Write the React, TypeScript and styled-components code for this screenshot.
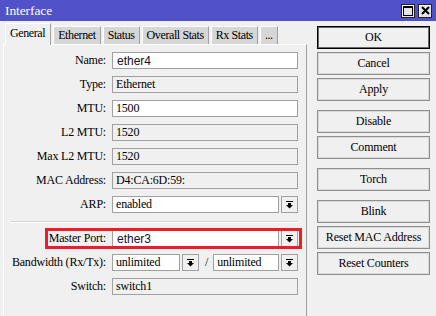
import React from "react"
import styled, { createGlobalStyle, css } from "styled-components"

const SERIF = `"Liberation Serif", "Times New Roman", serif`
const SANS = `"Liberation Sans", Arial, sans-serif`
const BG = "#f0f0f0"
const EDGE = "#a0a0a0"

const GlobalStyle = createGlobalStyle`
  html, body {
    margin: 0;
    padding: 0;
    background: ${BG};
  }
  body {
    font-family: ${SERIF};
    font-size: 12px;
    letter-spacing: -0.2px;
    color: #000;
  }
`

/**
 * Window frame
 */
const Window = styled.div`
  width: 436px;
  height: 316px;
  overflow: hidden;
  background: ${BG};
  display: flex;
  flex-direction: column;
`
Window.displayName = "Window"

const TitleBar = styled.header`
  height: 21px;
  flex: none;
  background: #5151c9;
  color: #fff;
  display: flex;
  align-items: center;
  justify-content: space-between;
  padding: 0 4px 0 5px;
  font-size: 13.5px;
  letter-spacing: -0.1px;
`
TitleBar.displayName = "TitleBar"

const TitleButtons = styled.div`
  display: flex;
  gap: 3px;
`

const TitleButton = styled.div`
  width: 14px;
  height: 14px;
  box-sizing: border-box;
  background: #e4e4e4;
  border: 1px solid #222;
  box-shadow: inset 1px 1px 0 #fff;
  display: flex;
  align-items: center;
  justify-content: center;
`
TitleButton.displayName = "TitleButton"

const Body = styled.div`
  flex: 1;
  display: flex;
  min-height: 0;
`

/**
 * Tabs + form panel
 */
const LeftSide = styled.div`
  width: 304px;
  margin-left: 3px;
  display: flex;
  flex-direction: column;
`

const TabBar = styled.nav`
  height: 23px;
  flex: none;
  display: flex;
  align-items: flex-end;
  gap: 2px;
  padding-left: 2px;
  position: relative;
  z-index: 1;
`

const Tab = styled.div<{ active?: boolean }>`
  box-sizing: border-box;
  height: 18px;
  padding: 0 4px;
  background: #d6d6d6;
  border-left: 1px solid #fff;
  border-top: 1px solid #fff;
  border-right: 1px solid ${EDGE};
  display: flex;
  align-items: center;
  white-space: nowrap;
  letter-spacing: -0.4px;
  ${(p) =>
    p.active &&
    css`
      height: 22px;
      margin-bottom: -1px;
      background: ${BG};
      padding: 0 5px 3px 4px;
    `}
`
Tab.displayName = "Tab"

const Panel = styled.section`
  flex: 1;
  border-top: 1px solid #fff;
  border-left: 1px solid #fff;
  border-right: 1px solid ${EDGE};
  padding: 7px 8px 0 0;
  display: flex;
  flex-direction: column;
  gap: 7px;
`
Panel.displayName = "Panel"

const Row = styled.div<{ highlight?: boolean }>`
  height: 17px;
  display: grid;
  grid-template-columns: 102px 1fr;
  column-gap: 6px;
  align-items: center;
  position: relative;
  ${(p) =>
    p.highlight &&
    css`
      &::after {
        content: "";
        position: absolute;
        left: 41px;
        right: -4px;
        top: -2px;
        bottom: -2px;
        border: 3px solid #ee1c25;
        pointer-events: none;
      }
    `}
`
Row.displayName = "Row"

const Label = styled.label`
  text-align: right;
  white-space: nowrap;
`

const Controls = styled.div`
  display: flex;
  align-items: center;
  gap: 2px;
  height: 17px;
`

const Field = styled.div<{ readOnly?: boolean; sans?: boolean; width?: number }>`
  box-sizing: border-box;
  height: 17px;
  ${(p) => (p.width ? `width: ${p.width}px; flex: none;` : "flex: 1;")}
  border: 1px solid ${EDGE};
  background: ${(p) => (p.readOnly ? BG : "#fff")};
  padding-left: 3px;
  display: flex;
  align-items: center;
  white-space: nowrap;
  overflow: hidden;
  ${(p) =>
    p.sans &&
    css`
      font-family: ${SANS};
      font-size: 12px;
      letter-spacing: 0;
      padding-left: 4px;
      color: #101030;
    `}
`
Field.displayName = "Field"

const DropButton = styled.div`
  box-sizing: border-box;
  width: 17px;
  height: 17px;
  flex: none;
  border: 1px solid ${EDGE};
  background: ${BG};
  display: flex;
  align-items: center;
  justify-content: center;
`
DropButton.displayName = "DropButton"

const Slash = styled.span`
  padding: 0 3px 0 4px;
`

const Separator = styled.hr`
  margin: 1px 0 0 7px;
  height: 0;
  border: none;
  border-top: 1px solid #d4d4d4;
  border-bottom: 1px solid #fff;
`

/**
 * Right column buttons
 */
const ButtonColumn = styled.aside`
  width: 113px;
  margin-left: 10px;
  padding-top: 5px;
  display: flex;
  flex-direction: column;
  gap: 3px;
`

const ActionButton = styled.button<{ primary?: boolean; spaced?: boolean }>`
  box-sizing: border-box;
  height: 23px;
  margin-top: ${(p) => (p.spaced ? "6px" : "0")};
  font-family: ${SERIF};
  font-size: 12px;
  letter-spacing: -0.2px;
  color: #000;
  background: ${BG};
  border: 1px solid ${(p) => (p.primary ? "#000" : "#8e8e8e")};
  box-shadow: inset 0 0 0 1px ${(p) => (p.primary ? "#6a6a6a" : "#dadada")};
  padding: 0;
`
ActionButton.displayName = "ActionButton"

function DropIcon() {
  return (
    <svg width="7" height="8" viewBox="0 0 7 8">
      <rect x="0" y="0" width="7" height="1" fill="#000" />
      <rect x="2" y="2" width="3" height="2" fill="#000" />
      <polygon points="0,4 7,4 3.5,7.5" fill="#000" />
    </svg>
  )
}

function TextRow(props: {
  label: string
  value: string
  readOnly?: boolean
  sans?: boolean
  dropdown?: boolean
  highlight?: boolean
}) {
  return (
    <Row highlight={props.highlight}>
      <Label>{props.label}</Label>
      <Controls>
        <Field readOnly={props.readOnly} sans={props.sans}>
          {props.value}
        </Field>
        {props.dropdown && (
          <DropButton>
            <DropIcon />
          </DropButton>
        )}
      </Controls>
    </Row>
  )
}

const tabs = ["General", "Ethernet", "Status", "Overall Stats", "Rx Stats", "..."]

const buttons: { label: string; primary?: boolean; spaced?: boolean }[] = [
  { label: "OK", primary: true },
  { label: "Cancel" },
  { label: "Apply" },
  { label: "Disable", spaced: true },
  { label: "Comment" },
  { label: "Torch", spaced: true },
  { label: "Blink", spaced: true },
  { label: "Reset MAC Address" },
  { label: "Reset Counters" },
]

export default function App() {
  return (
    <>
      <GlobalStyle />
      <Window>
        <TitleBar>
          <span>Interface</span>
          <TitleButtons>
            <TitleButton>
              <svg width="10" height="10" viewBox="0 0 10 10">
                <rect x="0.5" y="0.5" width="9" height="9" fill="none" stroke="#000" />
                <rect x="0" y="0" width="10" height="2" fill="#000" />
              </svg>
            </TitleButton>
            <TitleButton>
              <svg width="9" height="9" viewBox="0 0 9 9">
                <path d="M1 1 L8 8 M8 1 L1 8" stroke="#000" strokeWidth="2" />
              </svg>
            </TitleButton>
          </TitleButtons>
        </TitleBar>
        <Body>
          <LeftSide>
            <TabBar>
              {tabs.map((t, i) => (
                <Tab key={t} active={i === 0}>
                  {t}
                </Tab>
              ))}
            </TabBar>
            <Panel>
              <TextRow label="Name:" value="ether4" sans />
              <TextRow label="Type:" value="Ethernet" readOnly />
              <TextRow label="MTU:" value="1500" />
              <TextRow label="L2 MTU:" value="1520" readOnly />
              <TextRow label="Max L2 MTU:" value="1520" readOnly />
              <TextRow label="MAC Address:" value="D4:CA:6D:59:" readOnly />
              <TextRow label="ARP:" value="enabled" dropdown />
              <Separator />
              <TextRow label="Master Port:" value="ether3" sans dropdown highlight />
              <Row>
                <Label>Bandwidth (Rx/Tx):</Label>
                <Controls>
                  <Field width={68}>unlimited</Field>
                  <DropButton>
                    <DropIcon />
                  </DropButton>
                  <Slash>/</Slash>
                  <Field>unlimited</Field>
                  <DropButton>
                    <DropIcon />
                  </DropButton>
                </Controls>
              </Row>
              <TextRow label="Switch:" value="switch1" readOnly />
            </Panel>
          </LeftSide>
          <ButtonColumn>
            {buttons.map((b) => (
              <ActionButton key={b.label} primary={b.primary} spaced={b.spaced}>
                {b.label}
              </ActionButton>
            ))}
          </ButtonColumn>
        </Body>
      </Window>
    </>
  )
}
